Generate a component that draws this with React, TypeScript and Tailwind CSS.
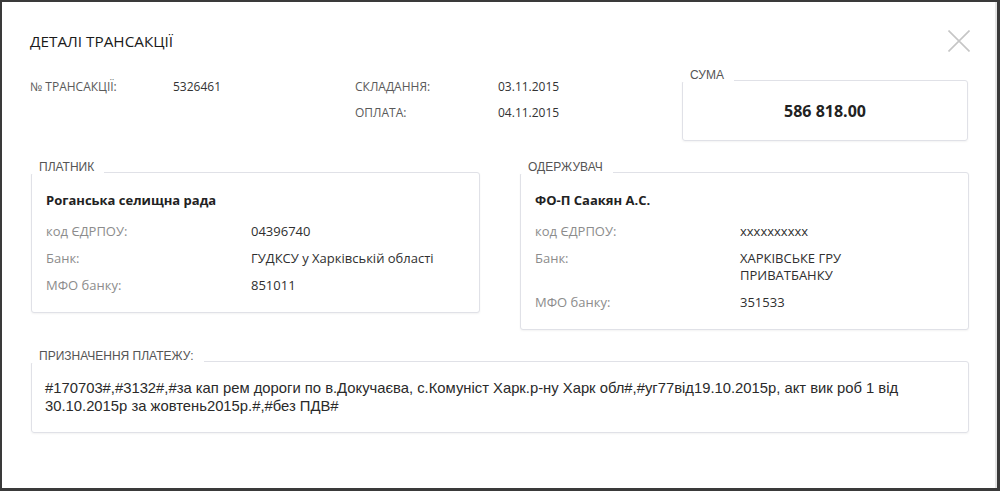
const openSans = "font-['Open_Sans',_'Liberation_Sans',_sans-serif]";

function Legend({ text }: { text: string }) {
  return (
    <span className="absolute left-[-1px] top-[-13px] bg-white pl-[8px] pr-[10px] font-['Liberation_Sans',_Arial,_sans-serif] text-[12px] leading-[14px] text-[#555]">
      {text}
    </span>
  );
}

function InfoRow({ label, value }: { label: string; value: string }) {
  return (
    <div className="flex h-[26px] items-center">
      <span className="w-[143px] text-[12px] text-[#5a5a5a]">{label}</span>
      <span className="text-[12px] text-[#333]">{value}</span>
    </div>
  );
}

function PartyRow({ label, value }: { label: string; value: React.ReactNode }) {
  return (
    <div className="flex text-[13px] leading-[17px]">
      <span className="w-[205px] shrink-0 text-[#8c8c8c]">{label}</span>
      <span className="text-[#2f2f2f]">{value}</span>
    </div>
  );
}

function PartyBox({
  legend,
  name,
  code,
  bank,
  mfo,
}: {
  legend: string;
  name: string;
  code: string;
  bank: React.ReactNode;
  mfo: string;
}) {
  return (
    <div className="relative flex-1 rounded-[3px] border border-[#e0e1e7] bg-white px-[14px] pb-[18px] pt-[18px] shadow-[0_1px_2px_rgba(0,0,0,0.05)]">
      <Legend text={legend} />
      <div className="text-[13px] font-bold leading-[18px] text-[#222]">{name}</div>
      <div className="mt-[14px] flex flex-col gap-[10px]">
        <PartyRow label="код ЄДРПОУ:" value={code} />
        <PartyRow label="Банк:" value={bank} />
        <PartyRow label="МФО банку:" value={mfo} />
      </div>
    </div>
  );
}

export default function App() {
  return (
    <div className="h-[491px] w-[1000px] bg-[#3a3a3a] pb-[3px] pl-[2px] pr-[3px] pt-[2px]">
      <div className={`h-full border-r-2 border-[#e4e4e4] bg-white pl-[28px] pr-[26px] pt-[28px] ${openSans}`}>
        {/* header */}
        <div className="flex h-[22px] items-center justify-between">
          <h2 className="text-[15.3px] text-[#1a1a1a]">ДЕТАЛІ ТРАНСАКЦІЇ</h2>
          <svg width="22" height="22" viewBox="0 0 22 22" className="mr-[-1px] text-[#c6c6c6]">
            <path d="M0.5 0.5 L21.5 21.5 M21.5 0.5 L0.5 21.5" stroke="currentColor" strokeWidth="1.6" />
          </svg>
        </div>

        {/* summary */}
        <div className="mt-[22px] flex items-start">
          <div className="flex w-[325px] flex-col">
            <InfoRow label="№ ТРАНСАКЦІЇ:" value="5326461" />
          </div>
          <div className="flex w-[327px] flex-col">
            <InfoRow label="СКЛАДАННЯ:" value="03.11.2015" />
            <InfoRow label="ОПЛАТА:" value="04.11.2015" />
          </div>
          <div className="relative mt-[6px] flex h-[61px] w-[286px] items-center justify-center rounded-[3px] border border-[#e0e1e7] shadow-[0_1px_2px_rgba(0,0,0,0.05)]">
            <Legend text="СУМА" />
            <span className="text-[16px] font-bold text-[#222]">586 818.00</span>
          </div>
        </div>

        {/* parties */}
        <div className="ml-[1px] mt-[31px] flex items-start gap-[40px]">
          <PartyBox
            legend="ПЛАТНИК"
            name="Роганська селищна рада"
            code="04396740"
            bank="ГУДКСУ у Харківській області"
            mfo="851011"
          />
          <PartyBox
            legend="ОДЕРЖУВАЧ"
            name="ФО-П Саакян А.С."
            code="xxxxxxxxxx"
            bank={
              <>
                ХАРКІВСЬКЕ ГРУ
                <br />
                ПРИВАТБАНКУ
              </>
            }
            mfo="351533"
          />
        </div>

        {/* purpose */}
        <div className="relative ml-[1px] mt-[31px] rounded-[3px] border border-[#e0e1e7] px-[13px] py-[17px] shadow-[0_1px_2px_rgba(0,0,0,0.05)]">
          <Legend text="ПРИЗНАЧЕННЯ ПЛАТЕЖУ:" />
          <p className="font-['Liberation_Sans',_Arial,_sans-serif] text-[14.8px] leading-[18px] text-[#2a2a2a]">
            #170703#,#3132#,#за кап рем дороги по в.Докучаєва, с.Комуніст Харк.р-ну Харк обл#,#уг77від19.10.2015р, акт вик роб 1 від 30.10.2015р за жовтень2015р.#,#без ПДВ#
          </p>
        </div>
      </div>
    </div>
  );
}
